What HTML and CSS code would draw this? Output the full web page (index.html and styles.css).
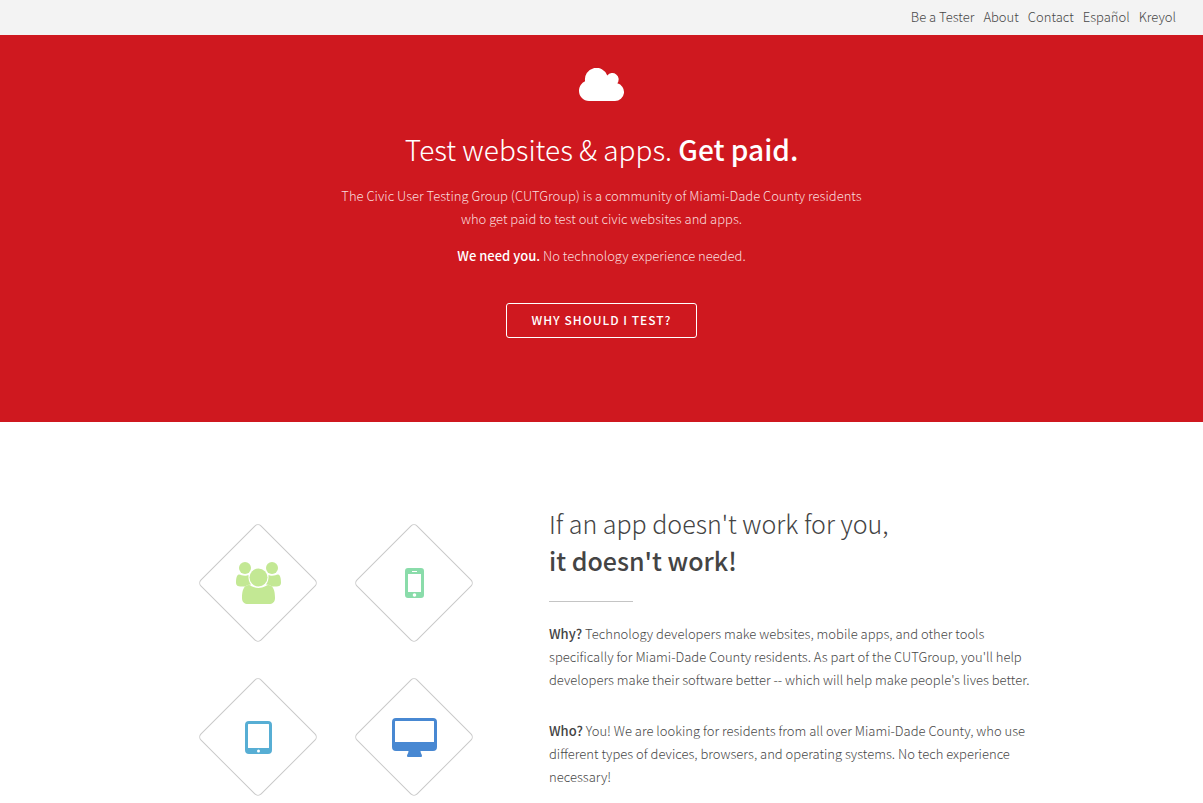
FILE: index.html
```html
<!DOCTYPE html>
<html lang="en">
<head>
<meta charset="UTF-8" />
<meta name="viewport" content="width=device-width, initial-scale=1" />
<title>CUTGroup Miami</title>
<link rel="stylesheet" href="styles.css">
</head>
<body>

<header id="header">
<nav>
<a href="#tester">Be a Tester</a>
<a href="#about">About</a>
<a href="#contact">Contact</a>
<a href="#es">Español</a>
<a href="#ht">Kreyol</a>
</nav>
</header>

<section id="banner">
<svg class="cloud" width="45" height="33" viewBox="0 0 45 33" aria-hidden="true">
<path d="M10 33C4.500 33 0 28.500 0 23C0 18.500 2.500 14.900 6.100 13.200A11.500 11.500 0 0 1 28.300 7.500A5.900 5.900 0 0 1 38.300 15.300A9 9 0 0 1 36 33Z" />
</svg>
<h2>Test websites &amp; apps. <strong>Get paid.</strong></h2>
<p>The Civic User Testing Group (CUTGroup) is a community of Miami-Dade County residents<br />
who get paid to test out civic websites and apps.</p>
<p><strong>We need you.</strong> No technology experience needed.</p>
<button type="button" class="button">Why should I test?</button>
</section>

<main id="main">
<div class="icons">
<div class="diamond users">
<svg width="45" height="42" viewBox="0 0 45 42" aria-hidden="true">
<circle cx="9" cy="6" r="6" />
<circle cx="36" cy="6" r="6" />
<path d="M3 12.500C5 12.500 6 13.800 9 13.800C10.500 13.800 11.500 13.500 12.500 13C12.200 17 13 20 15 22.500C12.500 22.500 10.500 23.200 9 24.500H4.500C2 24.500 0 23.500 0 21C0 18 .3 12.500 3 12.500Z" />
<path d="M42 12.500C40 12.500 39 13.800 36 13.800C34.500 13.800 33.500 13.500 32.500 13C32.800 17 32 20 30 22.500C32.500 22.500 34.500 23.200 36 24.500H40.500C43 24.500 45 23.500 45 21C45 18 44.700 12.500 42 12.500Z" />
<circle cx="22.500" cy="15.500" r="9" />
<path d="M13 23C14.500 23 17 26 22.500 26S30.500 23 32 23C37.500 23 39 29 39 36C39 40 36.500 42 33 42H12C8.500 42 6 40 6 36C6 29 7.500 23 13 23Z" />
</svg>
</div>
<div class="diamond phone">
<svg width="19" height="30" viewBox="0 0 19 30" aria-hidden="true">
<path fill-rule="evenodd" d="M3 0H16A3 3 0 0 1 19 3V27A3 3 0 0 1 16 30H3A3 3 0 0 1 0 27V3A3 3 0 0 1 3 0ZM3 6V24H16V6ZM7 3V4H12V3ZM9.500 25.200A1.800 1.800 0 1 0 9.500 28.800A1.800 1.800 0 1 0 9.500 25.200Z" />
</svg>
</div>
<div class="diamond tablet">
<svg width="27" height="33" viewBox="0 0 27 33" aria-hidden="true">
<path fill-rule="evenodd" d="M4 0H23A4 4 0 0 1 27 4V29A4 4 0 0 1 23 33H4A4 4 0 0 1 0 29V4A4 4 0 0 1 4 0ZM3.500 3Q3 3 3 3.500V26.500Q3 27 3.500 27H23.500Q24 27 24 26.500V3.500Q24 3 23.500 3ZM13.500 28.500A1.500 1.500 0 1 0 13.500 31.500A1.500 1.500 0 1 0 13.500 28.500Z" />
</svg>
</div>
<div class="diamond desktop">
<svg width="45" height="39" viewBox="0 0 45 39" aria-hidden="true">
<path fill-rule="evenodd" d="M4 0H41A4 4 0 0 1 45 4V29A4 4 0 0 1 41 33H28.500C28.500 35 30 36.500 30 38Q30 39 29 39H16Q15 39 15 38C15 36.500 16.500 35 16.500 33H4A4 4 0 0 1 0 29V4A4 4 0 0 1 4 0ZM3.500 3Q3 3 3 3.500V24H42V3.500Q42 3 41.500 3Z" />
</svg>
</div>
</div>

<div class="content">
<h2>If an app doesn't work for you,<br />
<strong>it doesn't work!</strong></h2>
<hr />
<p><strong>Why?</strong> Technology developers make websites, mobile apps, and other tools<br />
specifically for Miami-Dade County residents. As part of the CUTGroup, you'll help developers make their software better -- which will help make people's lives better.</p>
<p><strong>Who?</strong> You! We are looking for residents from all over Miami-Dade County, who use different types of devices, browsers, and operating systems. No tech experience<br />
necessary!</p>
</div>
</main>

</body>
</html>
```
FILE: styles.css
```css
* {
box-sizing: border-box;
}
body {
margin: 0;
background: #fff;
color: #484848;
font-family: "Source Sans Pro", "Noto Sans CJK SC", sans-serif;
font-size: 13px;
font-weight: 300;
line-height: 23px;
}
h2, p {
margin: 0;
font-weight: 300;
}
strong {
font-weight: 500;
}
#header {
background: #f3f3f3;
padding: 5px 27px 7px;
}
#header nav {
display: flex;
justify-content: flex-end;
gap: 9px;
}
#header a {
color: #484848;
text-decoration: none;
}
#banner {
background: #cf181f;
color: #f9dcdd;
text-align: center;
padding: 33px 24px 84px;
}
#banner .cloud {
display: block;
margin: 0 auto 27px;
fill: #fff;
}
#banner h2 {
color: #fff;
font-size: 28px;
line-height: 42px;
margin-bottom: 14px;
}
#banner p {
margin-bottom: 14px;
}
#banner strong {
color: #fff;
}
.button {
margin-top: 22px;
padding: 0 25px 2px;
height: 35px;
background: none;
border: 1px solid #fff;
border-radius: 3px;
color: #fff;
font-family: inherit;
font-size: 12px;
font-weight: 500;
letter-spacing: 1px;
text-transform: uppercase;
cursor: pointer;
}
#main {
display: grid;
grid-template-columns: 312px 1fr;
gap: 57px;
max-width: 865px;
margin: 0 auto;
padding: 83px 0 0 11px;
}
.icons {
display: grid;
grid-template-columns: 156px 156px;
grid-auto-rows: 154px;
margin-top: 1px;
}
.diamond {
position: relative;
display: grid;
place-items: center;
}
.diamond::before {
content: "";
position: absolute;
width: 84px;
height: 84px;
border: 1px solid #c9c9c9;
border-radius: 5px;
transform: rotate(45deg);
}
.users { fill: #c3e894; }
.phone { fill: #8adcaa; }
.tablet { fill: #57aed4; }
.desktop { fill: #4888d2; }
.content h2 {
font-size: 25px;
line-height: 37px;
color: #444;
}
.content hr {
width: 84px;
height: 1px;
margin: 22px 0 20px;
border: none;
background: #c4c4c4;
}
.content p {
margin-bottom: 28px;
}
.content strong {
color: #444;
}
@media (max-width: 840px) {
#main {
grid-template-columns: 1fr;
justify-items: center;
padding: 42px 24px;
}
}
```
